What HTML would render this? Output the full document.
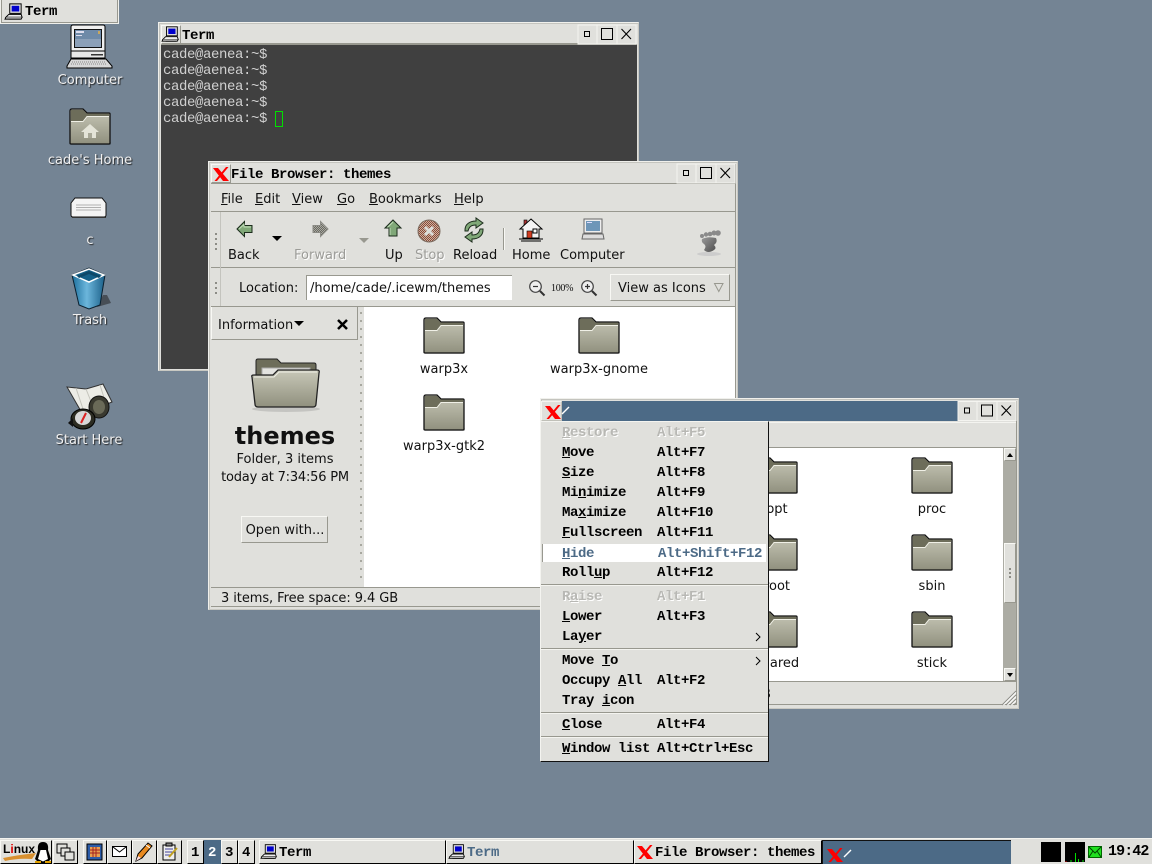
<!DOCTYPE html>
<html><head><meta charset="utf-8"><title>Desktop</title>
<style>
html,body{margin:0;padding:0}
#d{position:relative;width:1152px;height:864px;overflow:hidden;background:#748494;font:13px "DejaVu Sans","Liberation Sans",sans-serif;color:#111}
.a{position:absolute;box-sizing:border-box}
.t{position:absolute;white-space:nowrap;line-height:16px;margin-top:1px}
.s2{margin-top:2px}
.c{transform:translateX(-50%)}
.m{font-family:"Liberation Mono",monospace;font-size:14px;letter-spacing:-.4px;font-weight:bold;color:#000;margin-top:2px}
.tb{margin-top:1px}
.n{font-family:"Liberation Mono",monospace;font-size:14px;letter-spacing:-.4px;color:#d0d0d0;margin-top:1px}
.g{color:#9c9c98}
.dt{color:#f0f0f0;text-shadow:1px 1px 1px #222}
.f{background:#e0e0dc}
.up{background:#e0e0dc;border:1px solid;border-color:#f8f8f4 #98988f #98988f #f8f8f4}
.hl{background:#98988f;height:1px}
.win{background:#e0e0dc;border:1px solid;border-color:#f0f0ec #c8c8c2 #c8c8c2 #f0f0ec;box-shadow:inset 1px 1px 0 #c4c4be}
svg{position:absolute;overflow:visible}
</style></head><body><div id="d">

<svg width="0" height="0" style="position:absolute"><defs>
<linearGradient id="fg" x1="0" y1="0" x2="0" y2="1"><stop offset="0" stop-color="#c8c8b8"/><stop offset="1" stop-color="#90907e"/></linearGradient>
<symbol id="folder" viewBox="0 0 42 37" overflow="visible">
<rect x="2" y="34" width="40" height="3" fill="#000" opacity=".12"/>
<path d="M1 3Q1 1 3 1H14L18 5H40Q41 5 41 6V35Q41 36 40 36H2Q1 36 1 35Z" fill="url(#fg)" stroke="#111" stroke-width="1.3"/>
<path d="M2 2H14L17.500 5.500H40V8H18L14 13H2Z" fill="#6d6d5a"/>
<path d="M2 13.500H14L18 8.500H40" fill="none" stroke="#f0f0e6" stroke-width="1"/>
</symbol>
<symbol id="x" viewBox="0 0 16 14" overflow="visible">
<path d="M0 1H5L16 14H10Z" fill="#f00"/>
<path d="M13 0H15.500L4 14H1.500Z" fill="#f00"/>
</symbol>
<symbol id="pc" viewBox="0 0 20 20" overflow="visible">
<path d="M5 2H17V12H5Z" fill="#ddd" stroke="#000"/>
<rect x="7" y="4" width="8" height="6" fill="#00c"/>
<path d="M4 13H17L18 16H1Z" fill="#eee" stroke="#000"/>
<path d="M4 18H16" stroke="#000"/>
<path d="M1 16L0 18H17L18 16" fill="#ccc" stroke="#000"/>
</symbol>
<symbol id="wm" viewBox="0 0 58 19" overflow="visible">
<rect x="0" y="0" width="19" height="19" fill="#e0e0dc" stroke="#f4f4f0"/>
<rect x="19" y="0" width="20" height="19" fill="#e0e0dc" stroke="#f4f4f0"/>
<rect x="39" y="0" width="19" height="19" fill="#e0e0dc" stroke="#f4f4f0"/>
<rect x="6.500" y="6.500" width="5" height="5" fill="none" stroke="#000"/>
<rect x="23.500" y="3.500" width="11" height="11" fill="none" stroke="#000"/>
<path d="M43.500 4L53 14M53 4L43.500 14" stroke="#000" stroke-width="1.100" fill="none"/>
</symbol>
<pattern id="st" width="2" height="2" patternUnits="userSpaceOnUse"><rect width="2" height="2" fill="#a8a8a0"/><rect width="1" height="1" fill="#6a6a62"/><rect x="1" y="1" width="1" height="1" fill="#6a6a62"/></pattern>
<pattern id="st2" width="2" height="2" patternUnits="userSpaceOnUse"><rect width="2" height="2" fill="#cbb0a0"/><rect width="1" height="1" fill="#8a4a38"/><rect x="1" y="1" width="1" height="1" fill="#8a4a38"/></pattern>
<linearGradient id="trash" x1="0" y1="0" x2="1" y2="0"><stop offset="0" stop-color="#1c6f9c"/><stop offset=".45" stop-color="#6cb6dc"/><stop offset="1" stop-color="#1a5f88"/></linearGradient>
<linearGradient id="ft" x1="0" y1="0" x2="1" y2="1"><stop offset="0" stop-color="#9a9a9a"/><stop offset="1" stop-color="#4c4c4c"/></linearGradient>
</defs></svg>

<!-- Desktop icons -->
<svg style="left:66px;top:24px" width="48" height="46" viewBox="0 0 48 46">
<path d="M7 1H37Q39 1 39 3V27H5V3Q5 1 7 1Z" fill="#f0f0f0" stroke="#000"/>
<rect x="8.500" y="5.500" width="27" height="18" fill="#6e8aa8" stroke="#111"/>
<rect x="10" y="7" width="8" height="2" fill="#dde"/><rect x="10" y="11" width="6" height="1" fill="#dde"/><rect x="32" y="7" width="2" height="3" fill="#c8a860"/><rect x="9" y="15" width="26" height="8" fill="#8ca0b8"/>
<path d="M5 27H39V34H5Z" fill="#e8e8e8" stroke="#000"/><rect x="25" y="30" width="12" height="1.500" fill="#333"/>
<path d="M5 35H40L46 42V44H1V42Z" fill="#d8d8d8" stroke="#000"/><path d="M6 38H40M5 40H41" stroke="#888" stroke-dasharray="1 1"/>
</svg>
<div class="t dt c" style="left:90px;top:72px">Computer</div>
<svg style="left:69px;top:108px" width="42" height="37"><use href="#folder" width="42" height="37"/><path d="M21 16L30 24H27V30H15V24H12Z" fill="#e4e4d8"/><rect x="19" y="25" width="4" height="5" fill="#a8a898"/></svg>
<div class="t dt c" style="left:90px;top:152px">cade's Home</div>
<svg style="left:70px;top:197px" width="38" height="22" viewBox="0 0 38 22"><path d="M5 1H32L36 6V18Q36 20 34 20H3Q1 20 1 18V6Z" fill="#f4f4f4" stroke="#111"/><path d="M6 8H31M6 10.500H31M6 13H31" stroke="#b0b0b0"/><path d="M2 20H36V21H2Z" fill="#333"/></svg>
<div class="t dt c" style="left:90px;top:232px">c</div>
<svg style="left:71px;top:267px" width="44" height="44" viewBox="0 0 44 44"><path d="M26 40L40 36 36 28 32 28Z" fill="#222" opacity=".55"/><path d="M1 8L18 1 34 8 29 38 18 42 8 38Z" fill="url(#trash)" stroke="#0a2030"/><path d="M2 8L18 2 33 8 18 15Z" fill="#146088" stroke="#fff" stroke-width="1.500"/><path d="M6 9L18 4 30 9 28 11 18 7 8 11Z" fill="#0e4868"/></svg>
<div class="t dt c" style="left:90px;top:312px">Trash</div>
<svg style="left:64px;top:383px" width="50" height="48" viewBox="0 0 50 48">
<path d="M3 4L22 6 39 1 48 19 36 24 18 30Z" fill="#ecece6" stroke="#333"/><path d="M22 6L30 26M12 5L20 29M36 2L42 21" stroke="#c4c4bc"/>
<ellipse cx="35" cy="24" rx="10" ry="11" fill="#3a3a30" stroke="#111"/><ellipse cx="35" cy="24" rx="6" ry="7" fill="#6a6a58"/>
<ellipse cx="19" cy="36" rx="12" ry="10" fill="#2c2c22" stroke="#000"/><ellipse cx="19" cy="35" rx="8" ry="7" fill="#d8d8d8"/><path d="M22 30L17 40" stroke="#d22" stroke-width="2"/><path d="M4 40L9 35 9 44Z" fill="#111"/>
</svg>
<div class="t dt c" style="left:89px;top:432px">Start Here</div>

<!-- Top-left minimized -->
<div class="a f" style="left:0;top:0;width:119px;height:24px;border:1px solid #f0f0ec;border-top:0;box-shadow:inset -1px -1px 0 #98988f,inset 1px 0 0 #98988f,inset 0 -2px 0 #e0e0dc"></div>
<svg style="left:5px;top:2px" width="19" height="19"><use href="#pc" width="19" height="19"/></svg>
<div class="t m" style="left:25px;top:2px">Term</div>

<!-- Term window -->
<div class="a win" style="left:158px;top:22px;width:481px;height:349px"></div>
<div class="a" style="left:161px;top:25px;width:475px;height:19px;background:#e0e0dc;border-bottom:1px solid #98988f"></div>
<div class="a" style="left:161px;top:44px;width:476px;height:1px;background:#98988f"></div>
<div class="a up" style="left:161px;top:25px;width:20px;height:19px"></div>
<svg style="left:162px;top:25px" width="18" height="18"><use href="#pc" width="18" height="18"/></svg>
<div class="t m" style="left:182px;top:26px">Term</div>
<svg style="left:578px;top:25px" width="58" height="19"><use href="#wm" width="58" height="19"/></svg>
<div class="a" style="left:161px;top:45px;width:476px;height:324px;background:#404040"></div>
<div class="t n" style="left:163px;top:46px">cade@aenea:~$</div>
<div class="t n" style="left:163px;top:62px">cade@aenea:~$</div>
<div class="t n" style="left:163px;top:78px">cade@aenea:~$</div>
<div class="t n" style="left:163px;top:94px">cade@aenea:~$</div>
<div class="t n" style="left:163px;top:110px">cade@aenea:~$</div>
<div class="a" style="left:275px;top:111px;width:8px;height:16px;border:1px solid #00e000"></div>

<!-- File Browser window -->
<div class="a win" style="left:208px;top:161px;width:530px;height:449px"></div>
<div class="a" style="left:735px;top:164px;width:1px;height:443px;background:#98988f"></div>
<div class="a" style="left:211px;top:606px;width:525px;height:1px;background:#98988f"></div>
<div class="a" style="left:211px;top:164px;width:524px;height:19px;background:#e0e0dc"></div>
<div class="a hl" style="left:211px;top:183px;width:524px"></div>
<div class="a up" style="left:211px;top:164px;width:20px;height:19px"></div>
<svg style="left:213px;top:167px" width="16" height="14"><use href="#x" width="16" height="14"/></svg>
<div class="t m" style="left:231px;top:165px">File Browser: themes</div>
<svg style="left:677px;top:164px" width="58" height="19"><use href="#wm" width="58" height="19"/></svg>

<div class="a hl" style="left:211px;top:211px;width:524px"></div>
<div class="t s2" style="left:221px;top:190px"><u>F</u>ile</div>
<div class="t s2" style="left:255px;top:190px"><u>E</u>dit</div>
<div class="t s2" style="left:292px;top:190px"><u>V</u>iew</div>
<div class="t s2" style="left:337px;top:190px"><u>G</u>o</div>
<div class="t s2" style="left:369px;top:190px"><u>B</u>ookmarks</div>
<div class="t s2" style="left:454px;top:190px"><u>H</u>elp</div>

<div class="a hl" style="left:211px;top:267px;width:524px"></div>
<div class="a" style="left:220px;top:212px;width:1px;height:94px;background:#c4c4be"></div>
<div class="a" style="left:215px;top:233px;width:2px;height:18px;background:repeating-linear-gradient(#8c8c86 0 2px,transparent 2px 5px)"></div>
<div class="a" style="left:215px;top:282px;width:2px;height:12px;background:repeating-linear-gradient(#8c8c86 0 2px,transparent 2px 5px)"></div>

<svg style="left:236px;top:220px" width="18" height="18" viewBox="0 0 18 18"><path d="M1 9L8.500 1.500V5.500H16V12.500H8.500V16.500Z" fill="#80a878" stroke="#1c2c1c"/><path d="M3 9L8 4.500V7H15" fill="none" stroke="#c0dcb8"/></svg>
<div class="t" style="left:228px;top:247px">Back</div>
<svg style="left:272px;top:236px" width="10" height="6"><path d="M0 0H10L5 5Z" fill="#000"/></svg>
<svg style="left:311px;top:220px" width="18" height="18" viewBox="0 0 18 18"><path d="M17 9L9.500 1.500V5.500H2V12.500H9.500V16.500Z" fill="url(#st)" stroke="#8c8c86"/></svg>
<div class="t g" style="left:294px;top:247px;text-shadow:1px 1px 0 #fff">Forward</div>
<svg style="left:359px;top:238px" width="10" height="6"><path d="M0 0H10L5 5Z" fill="#98988f"/></svg>
<svg style="left:384px;top:219px" width="18" height="18" viewBox="0 0 18 18"><path d="M9 1L17 9H13V17H5V9H1Z" fill="#80a878" stroke="#1c2c1c"/><path d="M3.500 8.500L9 3M6 16V9" fill="none" stroke="#c0dcb8"/></svg>
<div class="t" style="left:385px;top:247px">Up</div>
<svg style="left:417px;top:219px" width="24" height="24" viewBox="0 0 24 24"><circle cx="12" cy="12" r="11" fill="url(#st2)" stroke="#7a6a5e"/><path d="M8 8L16 16M16 8L8 16" stroke="#dcdcd8" stroke-width="3"/></svg>
<div class="t g" style="left:415px;top:247px;text-shadow:1px 1px 0 #fff">Stop</div>
<svg style="left:462px;top:218px" width="24" height="24" viewBox="0 0 24 24"><path d="M3 12C3 6 8 3 14 3V0L21 5 14 10V7C9 7 7 9 6 13L3 13Z" fill="#80a878" stroke="#1c2c1c"/><path d="M21 12C21 18 16 21 10 21V24L3 19 10 14V17C15 17 17 15 18 11L21 11Z" fill="#80a878" stroke="#1c2c1c"/></svg>
<div class="t" style="left:453px;top:247px">Reload</div>
<div class="a" style="left:503px;top:228px;width:1px;height:22px;background:#98988f;box-shadow:1px 0 0 #f8f8f4"></div>
<svg style="left:519px;top:218px" width="24" height="24" viewBox="0 0 24 24"><rect x="5" y="2" width="3" height="5" fill="#a33" stroke="#000" stroke-width=".6"/><path d="M12 1L23 11H20V20H4V11H1Z" fill="#f4f4f4" stroke="#000"/><rect x="8" y="13" width="5" height="7" fill="#d03c20" stroke="#000" stroke-width=".6"/><rect x="14" y="11" width="4" height="4" fill="#fff" stroke="#000"/><path d="M0 21H24M2 23H22" stroke="#000"/></svg>
<div class="t" style="left:512px;top:247px">Home</div>
<svg style="left:581px;top:218px" width="24" height="24" viewBox="0 0 24 24"><path d="M3 1H21V15H3Z" fill="#eee" stroke="#666"/><rect x="5" y="3" width="14" height="10" fill="#6e96b8"/><rect x="6" y="4" width="5" height="1" fill="#ddf"/><path d="M2 16H22L23 21H1Z" fill="#ddd" stroke="#666"/></svg>
<div class="t" style="left:560px;top:247px">Computer</div>
<svg style="left:696px;top:229px" width="28" height="28" viewBox="0 0 28 28"><ellipse cx="13" cy="25" rx="12" ry="2" fill="#ccc"/><path d="M6 10Q12 7 20 9Q22 13 18 16Q21 19 18 21Q12 25 8 21Q11 17 8 15Q5 13 6 10Z" fill="url(#ft)"/><circle cx="6" cy="7" r="2" fill="#8a8a8a"/><circle cx="10" cy="5.500" r="2.200" fill="#8a8a8a"/><circle cx="14" cy="5" r="2.300" fill="#8a8a8a"/><circle cx="18" cy="4" r="2.500" fill="#8a8a8a"/><circle cx="22" cy="4" r="2.800" fill="#8a8a8a"/></svg>

<div class="a hl" style="left:211px;top:306px;width:524px"></div>
<div class="t" style="left:239px;top:280px">Location:</div>
<div class="a" style="left:306px;top:275px;width:206px;height:25px;background:#fff;border-left:1px solid #98988f;border-top:1px solid #98988f"></div>
<div class="t" style="left:310px;top:280px">/home/cade/.icewm/themes</div>
<svg style="left:528px;top:279px" width="18" height="18" viewBox="0 0 18 18"><circle cx="7.500" cy="7.500" r="5.800" fill="#eee" stroke="#444" stroke-width="1.200"/><path d="M5 7.500H10" stroke="#333" stroke-width="1.200"/><path d="M12 12L16.500 16.500" stroke="#333" stroke-width="2"/></svg>
<div class="t" style="left:551px;top:280px;font:10px/16px 'Liberation Serif',serif;letter-spacing:-.3px">100%</div>
<svg style="left:580px;top:279px" width="18" height="18" viewBox="0 0 18 18"><circle cx="7.500" cy="7.500" r="5.800" fill="#eee" stroke="#444" stroke-width="1.200"/><path d="M5 7.500H10M7.500 5V10" stroke="#333" stroke-width="1.200"/><path d="M12 12L16.500 16.500" stroke="#333" stroke-width="2"/></svg>
<div class="a up" style="left:610px;top:274px;width:120px;height:27px"></div>
<div class="t" style="left:618px;top:280px">View as Icons</div>
<svg style="left:714px;top:283px" width="10" height="10"><path d="M.5 .5H9L4.800 8.500Z" fill="none" stroke="#98988f"/></svg>

<!-- Sidebar -->
<div class="a up" style="left:211px;top:307px;width:147px;height:33px;border-color:#98988f #98988f #98988f #98988f;border-top:0;border-left:1px solid #f8f8f4"></div>
<div class="t" style="left:218px;top:317px">Information</div>
<svg style="left:294px;top:321px" width="10" height="6"><path d="M0 0H10L5 5Z" fill="#000"/></svg>
<svg style="left:336px;top:318px" width="13" height="13"><path d="M2 2L11 11M11 2L2 11" stroke="#000" stroke-width="2.500"/></svg>
<div class="a" style="left:360px;top:312px;width:2px;height:272px;background:repeating-linear-gradient(#a8a8a0 0 2px,transparent 2px 8px)"></div>
<div class="a" style="left:364px;top:307px;width:371px;height:280px;background:#fff"></div>
<svg style="left:251px;top:357px" width="70" height="56" viewBox="0 0 70 56"><ellipse cx="35" cy="52" rx="34" ry="3" fill="#000" opacity=".12"/>
<path d="M5 4Q5 2 7 2H26L30 6H63Q65 6 65 8V20H5Z" fill="#6d6d5a" stroke="#222"/><rect x="11" y="11" width="48" height="12" fill="#e4e4e0" stroke="#aaa"/>
<path d="M1 20Q0 18 3 18H22L27 13H66Q69 13 68 16L65 47Q65 50 62 50H7Q4 50 4 47Z" fill="url(#fg)" stroke="#222" stroke-width="1.300"/><path d="M3 20H23L28 15H66" fill="none" stroke="#f0f0e6"/></svg>
<div class="t c" style="left:285px;top:423px;font-weight:bold;font-size:24px;line-height:24px">themes</div>
<div class="t c" style="left:285px;top:451px">Folder, 3 items</div>
<div class="t c s2" style="left:285px;top:468px;letter-spacing:-.2px">today at 7:34:56 PM</div>
<div class="a up" style="left:241px;top:516px;width:87px;height:27px"></div>
<div class="t c" style="left:285px;top:522px">Open with...</div>

<!-- Main folders -->
<svg style="left:423px;top:317px" width="42" height="37"><use href="#folder" width="42" height="37"/></svg>
<div class="t c s2" style="left:444px;top:360px">warp3x</div>
<svg style="left:578px;top:317px" width="42" height="37"><use href="#folder" width="42" height="37"/></svg>
<div class="t c s2" style="left:599px;top:360px">warp3x-gnome</div>
<svg style="left:423px;top:394px" width="42" height="37"><use href="#folder" width="42" height="37"/></svg>
<div class="t c s2" style="left:444px;top:437px">warp3x-gtk2</div>

<div class="a hl" style="left:211px;top:587px;width:524px"></div>
<div class="t s2" style="left:221px;top:589px;letter-spacing:-.07px">3 items, Free space: 9.4 GB</div>

<!-- Third window -->
<div class="a win" style="left:540px;top:398px;width:479px;height:311px"></div>
<div class="a" style="left:1016px;top:401px;width:1px;height:304px;background:#98988f"></div>
<div class="a" style="left:543px;top:704px;width:474px;height:1px;background:#98988f"></div>
<div class="a up" style="left:541px;top:401px;width:21px;height:20px;border-color:#f4f4f0 #c0c0b8 #c0c0b8 #f4f4f0"></div>
<svg style="left:545px;top:405px" width="16" height="14"><use href="#x" width="16" height="14"/></svg>
<div class="a" style="left:562px;top:401px;width:396px;height:20px;background:#4c6a86"></div>
<svg style="left:562px;top:406px" width="8" height="9"><path d="M0 8L7 1" stroke="#fff" stroke-width="1.400"/></svg>
<svg style="left:958px;top:401px" width="58" height="20"><use href="#wm" width="58" height="20"/></svg>
<div class="a" style="left:543px;top:422px;width:473px;height:25px;background:#e0e0dc;border-top:1px solid #f4f4f0"></div>
<div class="a hl" style="left:543px;top:447px;width:473px"></div>
<div class="a" style="left:543px;top:448px;width:460px;height:233px;background:#fff"></div>
<div class="a" style="left:1003px;top:448px;width:13px;height:233px;background:#acaca4"></div>
<div class="a up" style="left:1004px;top:448px;width:12px;height:13px"></div>
<svg style="left:1007px;top:453px" width="7" height="4"><path d="M0 4H6L3 0Z" fill="#000"/></svg>
<div class="a up" style="left:1004px;top:668px;width:12px;height:13px"></div>
<svg style="left:1007px;top:673px" width="7" height="4"><path d="M0 0H6L3 4Z" fill="#000"/></svg>
<div class="a up" style="left:1004px;top:543px;width:12px;height:60px"></div>
<div class="a" style="left:1009px;top:568px;width:2px;height:11px;background:repeating-linear-gradient(#8c8c86 0 2px,transparent 2px 4px)"></div>

<svg style="left:756px;top:457px" width="42" height="37"><use href="#folder" width="42" height="37"/></svg>
<div class="t c s2" style="left:777px;top:500px">opt</div>
<svg style="left:756px;top:534px" width="42" height="37"><use href="#folder" width="42" height="37"/></svg>
<div class="t c s2" style="left:777px;top:577px">root</div>
<svg style="left:756px;top:611px" width="42" height="37"><use href="#folder" width="42" height="37"/></svg>
<div class="t c s2" style="left:777px;top:654px">shared</div>
<svg style="left:911px;top:457px" width="42" height="37"><use href="#folder" width="42" height="37"/></svg>
<div class="t c s2" style="left:932px;top:500px">proc</div>
<svg style="left:911px;top:534px" width="42" height="37"><use href="#folder" width="42" height="37"/></svg>
<div class="t c s2" style="left:932px;top:577px">sbin</div>
<svg style="left:911px;top:611px" width="42" height="37"><use href="#folder" width="42" height="37"/></svg>
<div class="t c s2" style="left:932px;top:654px">stick</div>
<div class="a hl" style="left:543px;top:681px;width:473px"></div>
<div class="t" style="left:762px;top:686px">B</div>
<svg style="left:1001px;top:690px" width="16" height="16"><path d="M15 1L1 15M15 5L5 15M15 9L9 15M15 13L13 15" stroke="#8c8c86"/><path d="M15 2.500L2.500 15M15 6.500L6.500 15M15 10.500L10.500 15" stroke="#fff"/></svg>

<!-- Menu -->
<div class="a" style="left:540px;top:421px;width:229px;height:341px;background:#e0e0dc;border:1px solid;border-color:#f4f4f0 #111 #111 #f4f4f0"></div>
<div class="a" style="left:542px;top:544px;width:224px;height:18px;background:#fff;border-left:1px solid #98988f"></div>
<div class="a hl" style="left:541px;top:584px;width:227px;box-shadow:0 1px 0 #f4f4f0"></div>
<div class="a hl" style="left:541px;top:648px;width:227px;box-shadow:0 1px 0 #f4f4f0"></div>
<div class="a hl" style="left:541px;top:712px;width:227px;box-shadow:0 1px 0 #f4f4f0"></div>
<div class="a hl" style="left:541px;top:736px;width:227px;box-shadow:0 1px 0 #f4f4f0"></div>
<div class="t m" style="left:562px;top:423px;color:#b8b8b4;text-shadow:1px 1px 0 #fff"><u>R</u>estore</div><div class="t m" style="left:657px;top:423px;color:#b8b8b4;text-shadow:1px 1px 0 #fff">Alt+F5</div>
<div class="t m" style="left:562px;top:443px"><u>M</u>ove</div><div class="t m" style="left:657px;top:443px">Alt+F7</div>
<div class="t m" style="left:562px;top:463px"><u>S</u>ize</div><div class="t m" style="left:657px;top:463px">Alt+F8</div>
<div class="t m" style="left:562px;top:483px">Mi<u>n</u>imize</div><div class="t m" style="left:657px;top:483px">Alt+F9</div>
<div class="t m" style="left:562px;top:503px">Ma<u>x</u>imize</div><div class="t m" style="left:657px;top:503px">Alt+F10</div>
<div class="t m" style="left:562px;top:523px"><u>F</u>ullscreen</div><div class="t m" style="left:657px;top:523px">Alt+F11</div>
<div class="t m" style="left:562px;top:544px;color:#4c6a86"><u>H</u>ide</div><div class="t m" style="left:658px;top:544px;color:#4c6a86">Alt+Shift+F12</div>
<div class="t m" style="left:562px;top:563px">Roll<u>u</u>p</div><div class="t m" style="left:657px;top:563px">Alt+F12</div>
<div class="t m" style="left:562px;top:587px;color:#b8b8b4;text-shadow:1px 1px 0 #fff">R<u>a</u>ise</div><div class="t m" style="left:657px;top:587px;color:#b8b8b4;text-shadow:1px 1px 0 #fff">Alt+F1</div>
<div class="t m" style="left:562px;top:607px"><u>L</u>ower</div><div class="t m" style="left:657px;top:607px">Alt+F3</div>
<div class="t m" style="left:562px;top:627px">La<u>y</u>er</div>
<svg style="left:755px;top:632px" width="6" height="10"><path d="M1 1L5 5 1 9" fill="none" stroke="#000"/></svg>
<div class="t m" style="left:562px;top:651px">Move <u>T</u>o</div>
<svg style="left:755px;top:656px" width="6" height="10"><path d="M1 1L5 5 1 9" fill="none" stroke="#000"/></svg>
<div class="t m" style="left:562px;top:671px">Occupy <u>A</u>ll</div><div class="t m" style="left:657px;top:671px">Alt+F2</div>
<div class="t m" style="left:562px;top:691px">Tray <u>i</u>con</div>
<div class="t m" style="left:562px;top:715px"><u>C</u>lose</div><div class="t m" style="left:657px;top:715px">Alt+F4</div>
<div class="t m" style="left:562px;top:739px"><u>W</u>indow list</div><div class="t m" style="left:657px;top:739px">Alt+Ctrl+Esc</div>

<!-- Taskbar -->
<div class="a f" style="left:0;top:838px;width:1152px;height:26px;border-top:1px solid #f4f4f0"></div>
<div class="a up" style="left:0;top:840px;width:52px;height:24px;border-right-color:#000;border-bottom-color:#000"></div>
<svg style="left:2px;top:841px" width="49" height="22" viewBox="0 0 49 22"><path d="M1 17Q16 14 34 12L30 18Q16 17 3 20Z" fill="#d89030"/><text x="1" y="12" font-family="Liberation Sans,sans-serif" font-weight="bold" font-size="12" fill="#000">L<tspan fill="#d00">i</tspan>nux</text><path d="M41 1Q47 1 46 9L49 18 45 22H37L33 18 36 9Q35 1 41 1Z" fill="#000"/><path d="M38.500 9H44L46 18 41 20.500 36 18Z" fill="#fff"/><path d="M33 21H39M43 21H49" stroke="#e0a000" stroke-width="2"/></svg>
<div class="a up" style="left:53px;top:840px;width:25px;height:24px;border-right-color:#000;border-bottom-color:#000"></div>
<svg style="left:56px;top:843px" width="19" height="18"><rect x="1" y="1" width="10" height="9" fill="#e0e0dc" stroke="#000"/><rect x="5" y="5" width="9" height="8" fill="#e0e0dc" stroke="#000"/><rect x="9" y="9" width="9" height="8" fill="#e0e0dc" stroke="#000"/></svg>
<div class="a up" style="left:83px;top:840px;width:24px;height:24px;border-right-color:#000;border-bottom-color:#000"></div>
<svg style="left:86px;top:842px" width="18" height="20"><rect x="1" y="2" width="15" height="16" fill="#2c5ca8" stroke="#000"/><path d="M4 5H14V15H4Z" fill="#e8a050"/><path d="M4 8H14M4 11H14M7 5V15M10 5V15" stroke="#a02020"/></svg>
<div class="a up" style="left:107px;top:840px;width:25px;height:24px;border-right-color:#000;border-bottom-color:#000"></div>
<svg style="left:112px;top:846px" width="16" height="12"><rect x=".5" y=".5" width="14" height="10" fill="#fff" stroke="#000"/><path d="M1 1L7.500 6 14 1" fill="none" stroke="#000"/></svg>
<div class="a up" style="left:132px;top:840px;width:25px;height:24px;border-right-color:#000;border-bottom-color:#000"></div>
<svg style="left:135px;top:842px" width="18" height="20"><path d="M1 19L3 12 13 1 17 4 7 16Z" fill="#e88a20" stroke="#000"/><path d="M1 19L3 14 6 16Z" fill="#fdd"/><path d="M11 3L15 6" stroke="#fff"/></svg>
<div class="a up" style="left:157px;top:840px;width:25px;height:24px;border-right-color:#000;border-bottom-color:#000"></div>
<svg style="left:161px;top:842px" width="18" height="20"><rect x="2" y="3" width="12" height="15" fill="#eee" stroke="#000"/><rect x="5" y="1" width="6" height="3" fill="#888" stroke="#000"/><path d="M4 7H12M4 10H12M4 13H9" stroke="#449"/><path d="M8 15L16 6" stroke="#c0a020" stroke-width="2"/></svg>
<div class="a up" style="left:187px;top:840px;width:17px;height:24px;border-right-color:#000;border-bottom-color:#000"></div>
<div class="a" style="left:204px;top:840px;width:17px;height:24px;background:#4c6a86"></div>
<div class="a up" style="left:221px;top:840px;width:17px;height:24px;border-right-color:#000;border-bottom-color:#000"></div>
<div class="a up" style="left:238px;top:840px;width:17px;height:24px;border-right-color:#000;border-bottom-color:#000"></div>
<div class="t m tb" style="left:191px;top:844px">1</div>
<div class="t m tb" style="left:208px;top:844px;color:#fff">2</div>
<div class="t m tb" style="left:225px;top:844px">3</div>
<div class="t m tb" style="left:242px;top:844px">4</div>
<div class="a up" style="left:259px;top:840px;width:187px;height:24px;border-right-color:#000;border-bottom-color:#000"></div>
<svg style="left:261px;top:843px" width="17" height="17"><use href="#pc" width="17" height="17"/></svg>
<div class="t m tb" style="left:279px;top:844px">Term</div>
<div class="a up" style="left:446px;top:840px;width:188px;height:24px;border-right-color:#000;border-bottom-color:#000"></div>
<svg style="left:449px;top:843px" width="17" height="17"><use href="#pc" width="17" height="17"/></svg>
<div class="t m tb" style="left:467px;top:844px;color:#4c6a86">Term</div>
<div class="a up" style="left:634px;top:840px;width:188px;height:24px;border-right-color:#000;border-bottom-color:#000"></div>
<svg style="left:637px;top:845px" width="16" height="14"><use href="#x" width="16" height="14"/></svg>
<div class="t m tb" style="left:655px;top:844px">File Browser: themes</div>
<div class="a" style="left:822px;top:840px;width:189px;height:24px;background:#4c6a86;border-top:1px solid #111;border-left:1px solid #111"></div>
<svg style="left:827px;top:848px" width="16" height="14"><use href="#x" width="16" height="14"/></svg>
<svg style="left:844px;top:849px" width="8" height="9"><path d="M0 8L7 1" stroke="#fff" stroke-width="1.400"/></svg>
<div class="a" style="left:1041px;top:842px;width:20px;height:20px;background:#000"></div>
<div class="a" style="left:1065px;top:842px;width:20px;height:20px;background:#000"></div>
<svg style="left:1065px;top:842px" width="20" height="20"><path d="M6 20V18M10.500 20V11M13.500 20V17M18 20V18" stroke="#00e000" fill="none"/><path d="M1 20V19" stroke="#d00" fill="none"/></svg>
<svg style="left:1088px;top:846px" width="15" height="13"><rect x=".5" y=".5" width="13" height="11" fill="#20e020" stroke="#060"/><path d="M1 1L7 7 13 1M1 11L5 5M13 11L9 5" fill="none" stroke="#040"/></svg>
<div class="t m tb" style="left:1108px;top:843px;font-size:15px;letter-spacing:-.9px">19:42</div>
</div></body></html>
